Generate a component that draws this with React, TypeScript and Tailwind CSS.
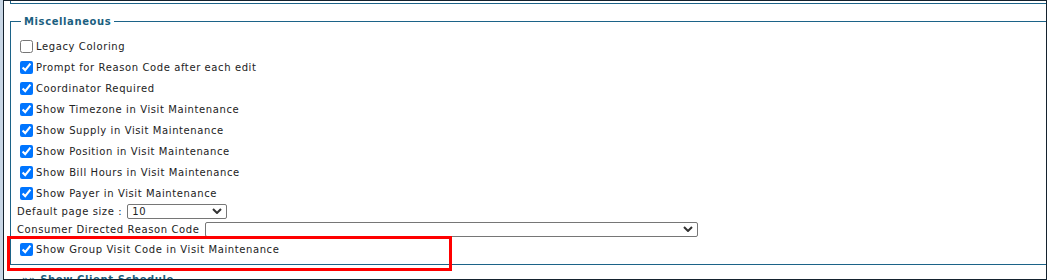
import React from "react";

const checks: { label: string; checked: boolean }[] = [
  { label: "Legacy Coloring", checked: false },
  { label: "Prompt for Reason Code after each edit", checked: true },
  { label: "Coordinator Required", checked: true },
  { label: "Show Timezone in Visit Maintenance", checked: true },
  { label: "Show Supply in Visit Maintenance", checked: true },
  { label: "Show Position in Visit Maintenance", checked: true },
  { label: "Show Bill Hours in Visit Maintenance", checked: true },
  { label: "Show Payer in Visit Maintenance", checked: true },
];

function Chevron() {
  return (
    <svg width="10" height="6" viewBox="0 0 10 6" className="absolute right-[5px] top-[4px] pointer-events-none">
      <path d="M1 1 L5 5 L9 1" fill="none" stroke="#333" strokeWidth="2" />
    </svg>
  );
}

function CheckRow({ label, checked }: { label: string; checked: boolean }) {
  return (
    <label className="flex items-center h-[21px]">
      <input type="checkbox" defaultChecked={checked} className="w-[13px] h-[13px] ml-[3px] mr-[3px] shrink-0" />
      <span>{label}</span>
    </label>
  );
}

export default function App() {
  return (
    <div className="relative w-[1048px] h-[280px] overflow-hidden bg-white flex font-['DejaVu_Sans',sans-serif] text-[10px] tracking-[0.6px] text-[#222]">
      <div className="w-[3px] shrink-0 bg-[#c8d6e5]" />
      <div className="w-[1044px] h-[280px] shrink-0 border border-[#14222e] overflow-hidden">
        <div className="ml-[6px] h-[3px] border-l border-b border-[#1c6388]" />
        <fieldset className="mt-[11px] ml-[6px] -mr-[4px] border border-[#1c6388] pl-[6px] pt-[8px] pb-[4px]">
          <legend className="ml-[4px] px-[3px] font-bold text-[#1b5f80] leading-[13px]">Miscellaneous</legend>
          {checks.map((c) => (
            <CheckRow key={c.label} label={c.label} checked={c.checked} />
          ))}
          <div className="flex items-center h-[15px]">
            <span className="mr-[5px]">Default page size :</span>
            <div className="relative">
              <select className="appearance-none w-[100px] h-[15px] border border-[#767676] rounded-[2px] pl-[4px] leading-[13px] bg-white">
                <option>10</option>
              </select>
              <Chevron />
            </div>
          </div>
          <div className="flex items-center mt-[3px] h-[15px]">
            <span className="mr-[6px]">Consumer Directed Reason Code</span>
            <div className="relative">
              <select className="appearance-none w-[493px] h-[15px] border border-[#767676] rounded-[2px] pl-[4px] leading-[13px] bg-white">
                <option></option>
              </select>
              <Chevron />
            </div>
          </div>
          <div className="mt-[2px]">
            <CheckRow label="Show Group Visit Code in Visit Maintenance" checked={true} />
          </div>
        </fieldset>
        <div className="mt-[8px] pl-[18px] font-bold text-[#1b5f80] leading-[13px]">»» Show Client Schedule</div>
      </div>
      <div className="absolute left-[7px] top-[236px] w-[445px] h-[35px] border-[3px] border-[#ff0000]" />
    </div>
  );
}
